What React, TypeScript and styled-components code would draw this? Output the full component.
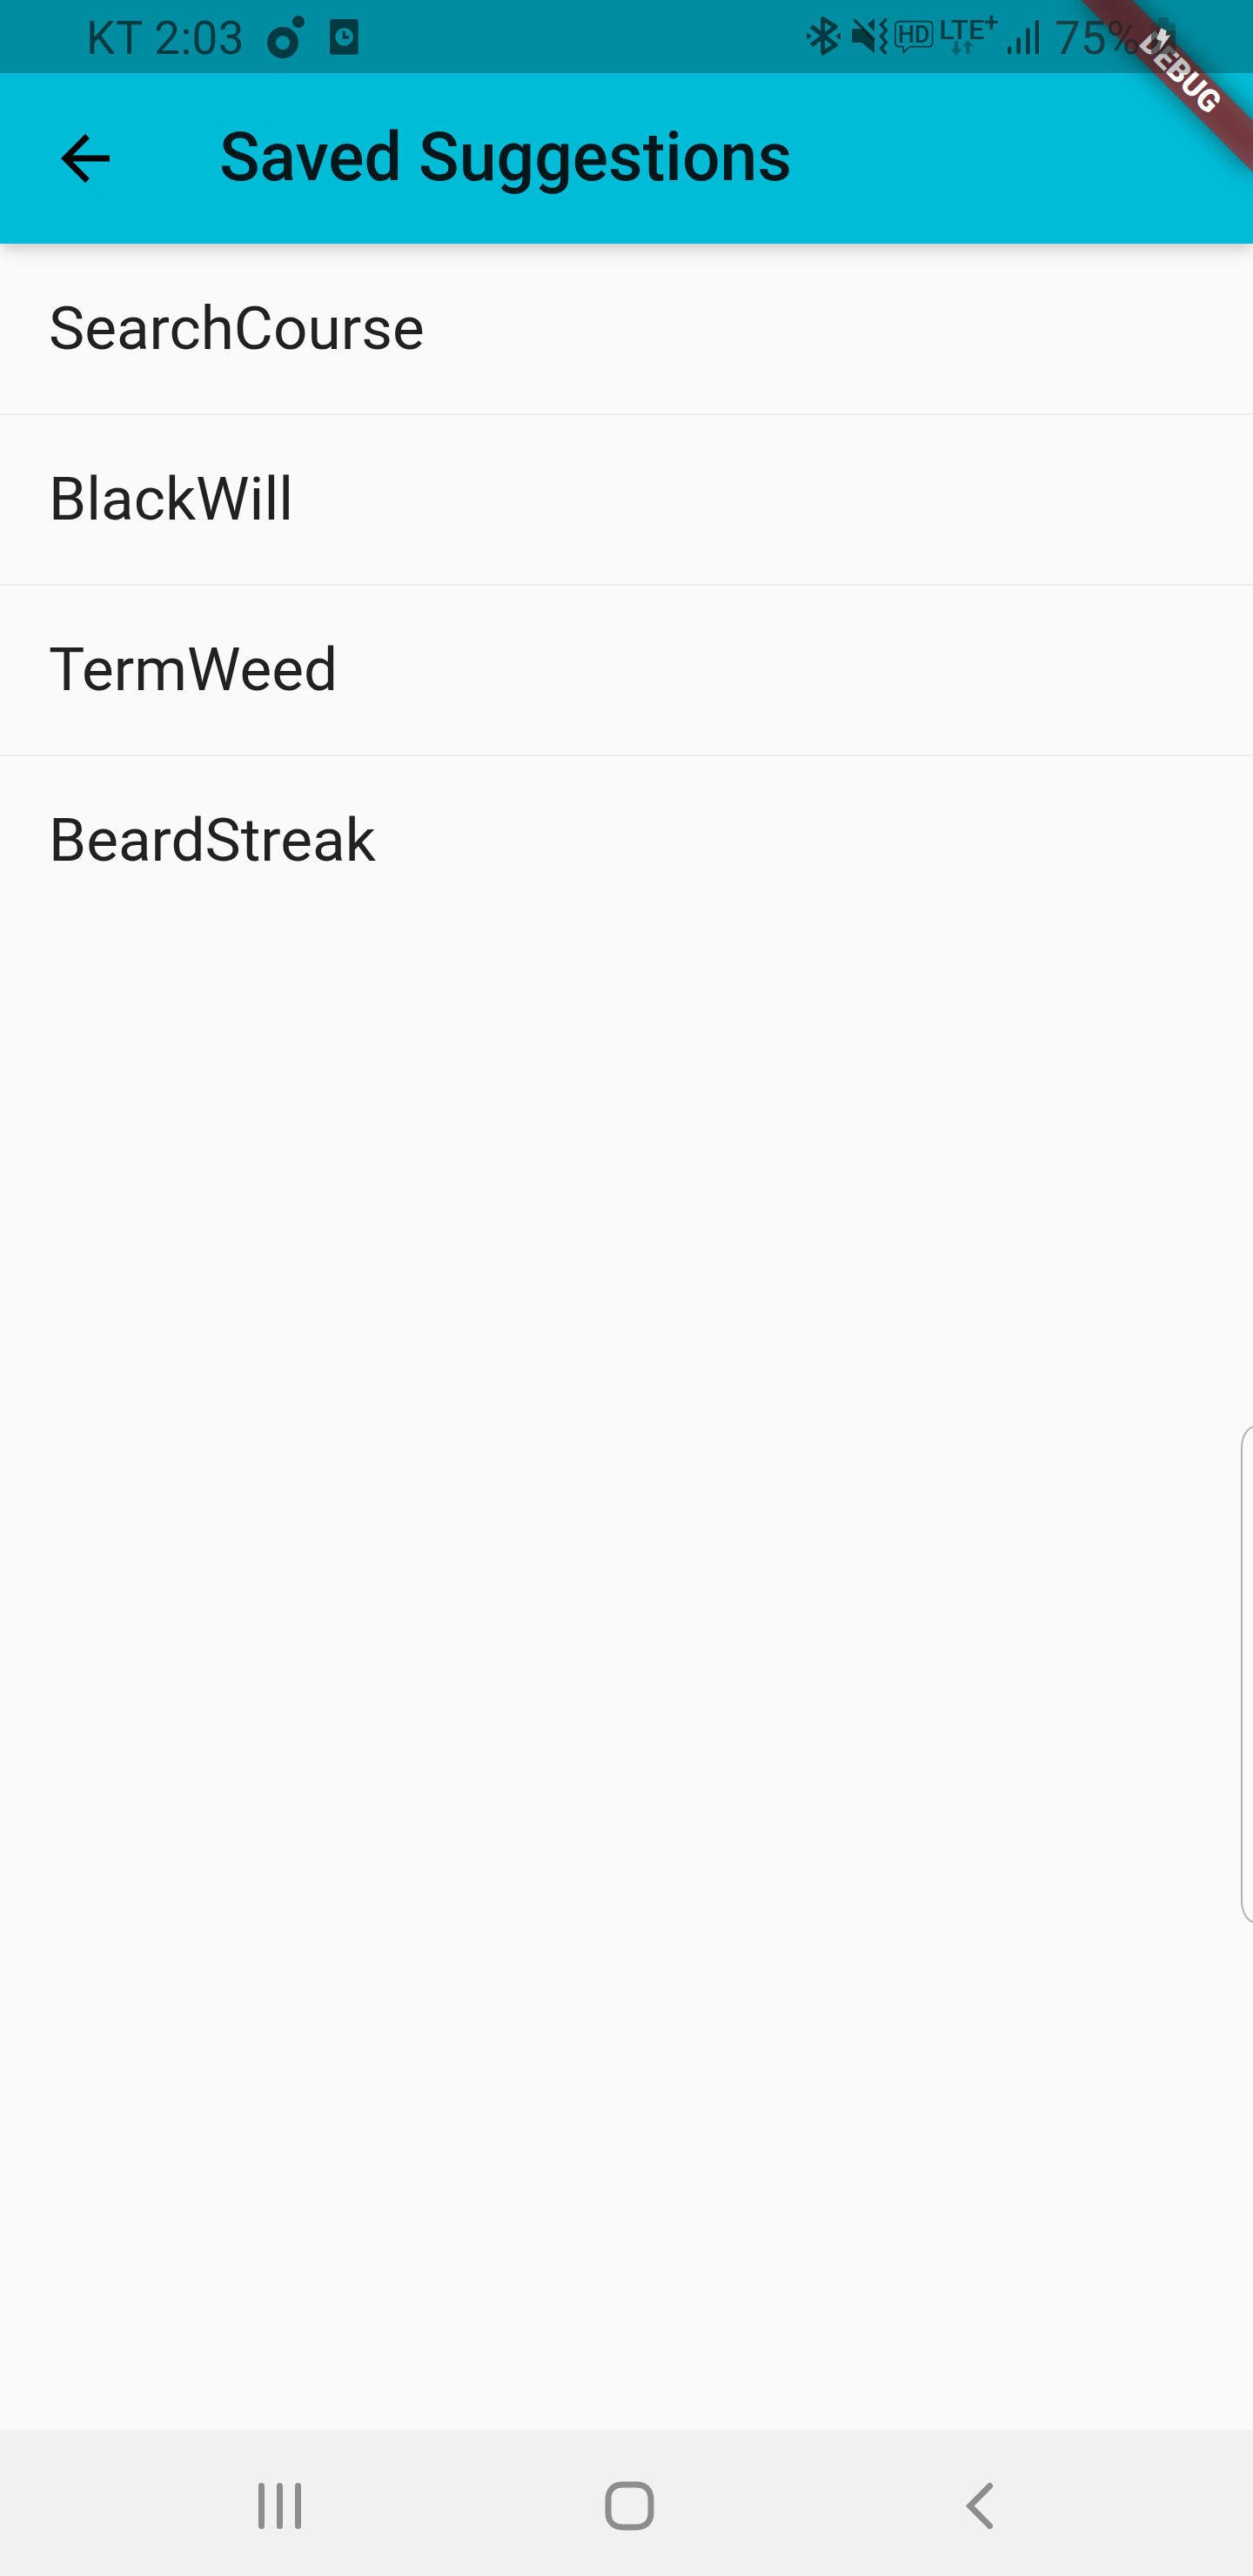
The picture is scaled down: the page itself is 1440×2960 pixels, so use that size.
import React from 'react';
import styled, { createGlobalStyle } from 'styled-components';

const GlobalStyle = createGlobalStyle`
  html, body { margin: 0; padding: 0; }
  body { font-family: Roboto, "Liberation Sans", sans-serif; background: #fafafa; }
`;

const Screen = styled.div`
  position: relative;
  display: flex;
  flex-direction: column;
  width: 1440px;
  height: 2960px;
  overflow: hidden;
  background: #fafafa;
`;

const Header = styled.header`
  position: relative;
  z-index: 1;
  background: #00bcd7;
  box-shadow: 0 7px 14px -3.5px rgba(0, 0, 0, 0.14), 0 14px 17.5px rgba(0, 0, 0, 0.04), 0 3.5px 20px rgba(0, 0, 0, 0.04);
`;

const StatusBar = styled.div`
  position: relative;
  z-index: 3;
  box-sizing: border-box;
  display: flex;
  justify-content: space-between;
  height: 84px;
  padding: 0 87px 0 98px;
  background: rgba(0, 0, 0, 0.25);
  color: rgba(0, 0, 0, 0.59);
`;

const StatusGroup = styled.div`
  display: flex;
  align-items: center;
`;

const StatusText = styled.span<{ $width: number; $indent: number; $faded?: boolean }>`
  width: ${(p) => p.$width}px;
  padding: 2px 0 0 ${(p) => p.$indent}px;
  font-size: 53px;
  line-height: 84px;
  height: 84px;
  box-sizing: border-box;
  letter-spacing: ${(p) => (p.$faded ? 0 : 0.4)}px;
  white-space: nowrap;
  color: ${(p) => (p.$faded ? 'rgba(33, 33, 33, 0.7)' : 'inherit')};
`;

const StatusIcon = styled.svg<{ $width: number }>`
  display: block;
  flex: none;
  width: ${(p) => p.$width}px;
  height: 84px;
`;

const Toolbar = styled.div`
  display: flex;
  align-items: center;
  height: 196px;
  padding-left: 56px;
  gap: 112px;
`;

const BackButton = styled.button`
  display: flex;
  padding: 0;
  border: 0;
  background: none;
`;

const Title = styled.h1`
  margin: 0 0 2px;
  font-size: 77px;
  font-weight: 500;
  line-height: 90px;
  white-space: nowrap;
  color: rgba(0, 0, 0, 0.87);
`;

const BannerClip = styled.div`
  position: absolute;
  z-index: 2;
  top: 0;
  right: 0;
  width: 320px;
  height: 320px;
  overflow: hidden;
  pointer-events: none;
`;

const BannerAxis = styled.div`
  position: absolute;
  top: 0;
  left: 100%;
  width: 0;
  height: 0;
  transform: rotate(45deg);
`;

const BannerShadow = styled.div`
  position: absolute;
  left: -140px;
  top: 98px;
  width: 280px;
  height: 42px;
  background: rgba(0, 0, 0, 0.5);
  filter: blur(13.9px);
`;

const BannerStrip = styled.div`
  position: absolute;
  left: -140px;
  top: 98px;
  width: 280px;
  height: 42px;
  display: flex;
  align-items: center;
  justify-content: center;
  background: rgba(183, 28, 28, 0.627);
  color: #fff;
  font-size: 35.7px;
  font-weight: 900;
  line-height: 1;
`;

const List = styled.ul`
  flex: 1;
  margin: 0;
  padding: 1px 0 0;
  list-style: none;
`;

const Row = styled.li`
  box-sizing: border-box;
  display: flex;
  align-items: center;
  height: 196px;
  padding: 0 56px 1px;
  border-bottom: 2px solid #ebebeb;
  font-size: 69.3px;
  color: rgba(0, 0, 0, 0.87);

  &:last-child {
    border-bottom-color: transparent;
  }
`;

const EdgeHandle = styled.div`
  position: absolute;
  top: 1638px;
  left: 1426px;
  box-sizing: border-box;
  width: 40px;
  height: 572px;
  border: 2px solid #b0b0b0;
  border-radius: 17px / 26px;
`;

const NavBar = styled.nav`
  box-sizing: border-box;
  display: flex;
  align-items: center;
  justify-content: space-between;
  height: 168px;
  padding: 0 273px 0 281px;
  background: #f1f1f1;
  color: #8d8d8d;
`;

const NavIcon = styled.svg`
  display: block;
  width: 80px;
  height: 80px;
  margin-top: 7px;
`;

const SAVED = ['SearchCourse', 'BlackWill', 'TermWeed', 'BeardStreak'];

const DiscIcon = () => (
  <StatusIcon $width={72} viewBox="654 0 216 252">
    <circle cx="735" cy="147" r="39" fill="none" stroke="currentColor" strokeWidth="30" />
    <circle cx="789" cy="75" r="21" fill="currentColor" />
  </StatusIcon>
);

const ClockCardIcon = () => (
  <StatusIcon $width={50} viewBox="870 0 150 252">
    <path
      fill="currentColor"
      fillRule="evenodd"
      d="M905 66H987Q995 66 995 74V180Q995 188 987 188H905Q897 188 897 180V74Q897 66 905 66ZM947 96A31 31 0 1 0 947 158A31 31 0 1 0 947 96ZM941 107H951V124H963V134H941Z"
    />
  </StatusIcon>
);

const BluetoothIcon = () => (
  <StatusIcon $width={45} viewBox="45 0 135 252">
    <path
      d="M67 91L151 155L107 183V65L151 92L67 156"
      fill="none"
      stroke="currentColor"
      strokeWidth="15"
      strokeLinejoin="round"
    />
    <path d="M52 112L69 125L52 138ZM168 112L151 125L168 138Z" fill="currentColor" />
  </StatusIcon>
);

const MuteVibrateIcon = () => (
  <StatusIcon $width={55} viewBox="180 0 165 252">
    <path d="M214 99H245L285 139V183L240 147H214Q207 147 207 140V106Q207 99 214 99ZM260 84L285 63V109Z" fill="currentColor" />
    <path d="M215 68L285 138" stroke="currentColor" strokeWidth="10" />
    <path d="M326 65L308 84L325 105L308 125L325 146L308 166L325 185" fill="none" stroke="currentColor" strokeWidth="11" />
  </StatusIcon>
);

const HdIcon = () => (
  <StatusIcon $width={51} viewBox="345 0 153 252">
    <path
      d="M371 74H472Q485 74 485 87V147Q485 161 472 161H407L385 181V161H371Q357 161 357 147V87Q357 74 371 74Z"
      fill="none"
      stroke="currentColor"
      strokeWidth="5"
      strokeLinejoin="round"
    />
    <text x="366" y="148" fontSize="82" fontWeight="500" textLength="110" lengthAdjust="spacingAndGlyphs" fill="currentColor">HD</text>
  </StatusIcon>
);

const LteIcon = () => (
  <StatusIcon $width={76} viewBox="498 0 228 252">
    <text x="508" y="135" fontSize="96" fontWeight="500" textLength="156" lengthAdjust="spacingAndGlyphs" fill="currentColor">LTE</text>
    <text x="662" y="108" fontSize="94" fontWeight="500" fill="currentColor">+</text>
    <path
      d="M560 141H573V168H586L567 193L548 168H560ZM600 186V160H587L607 139L627 160H613V186Z"
      fill="currentColor"
      opacity="0.5"
    />
  </StatusIcon>
);

const SignalIcon = () => (
  <StatusIcon $width={49} viewBox="726 0 147 252">
    <g fill="currentColor">
      <rect x="744" y="160" width="13" height="27" rx="5" />
      <rect x="775" y="129" width="14" height="58" rx="5" />
      <rect x="807" y="97" width="14" height="90" rx="5" />
      <rect x="839" y="69" width="13" height="118" rx="5" />
    </g>
  </StatusIcon>
);

const BatteryIcon = () => (
  <StatusIcon $width={40} viewBox="399 0 120 252">
    <path d="M453 80V66Q453 60 459 60H484Q490 60 490 66V80H507Q513 80 513 86V105H429V86Q429 80 435 80Z" fill="#212121" opacity="0.3" />
    <path d="M429 105H513V181Q513 187 507 187H435Q429 187 429 181Z" fill="#212121" opacity="0.6" />
    <path d="M463 97L482 106L479 123L496 121L458 173L466 142L447 134Z" fill="#d8d4d4" />
  </StatusIcon>
);

export default function App() {
  return (
    <>
      <GlobalStyle />
      <Screen>
        <Header>
          <StatusBar>
            <StatusGroup>
              <StatusText $width={200} $indent={1}>KT 2:03</StatusText>
              <DiscIcon />
              <ClockCardIcon />
            </StatusGroup>
            <StatusGroup>
              <BluetoothIcon />
              <MuteVibrateIcon />
              <HdIcon />
              <LteIcon />
              <SignalIcon />
              <StatusText $width={112} $indent={11} $faded>75%</StatusText>
              <BatteryIcon />
            </StatusGroup>
          </StatusBar>
          <Toolbar>
            <BackButton aria-label="Back">
              <svg width="84" height="84" viewBox="0 0 24 24">
                <path d="M20 11H7.83l5.59-5.59L12 4l-8 8 8 8 1.41-1.41L7.83 13H20v-2z" />
              </svg>
            </BackButton>
            <Title>Saved Suggestions</Title>
          </Toolbar>
          <BannerClip>
            <BannerAxis>
              <BannerShadow />
              <BannerStrip>DEBUG</BannerStrip>
            </BannerAxis>
          </BannerClip>
        </Header>
        <List>
          {SAVED.map((name) => (
            <Row key={name}>{name}</Row>
          ))}
        </List>
        <EdgeHandle />
        <NavBar>
          <NavIcon viewBox="281 2840 80 80">
            <path d="M300.5 2856.5V2902.5M321.5 2856.5V2902.5M342.5 2856.5V2902.5" stroke="currentColor" strokeWidth="7" strokeLinecap="round" />
          </NavIcon>
          <NavIcon viewBox="684 2840 80 80">
            <path
              d="M716 2855H731C742 2855 748 2861 748 2872V2887C748 2898 742 2904 731 2904H716C705 2904 699 2898 699 2887V2872C699 2861 705 2855 716 2855Z"
              fill="none"
              stroke="currentColor"
              strokeWidth="7"
            />
          </NavIcon>
          <NavIcon viewBox="1087 2840 80 80">
            <path d="M1137.5 2856.5L1114.7 2879.5L1137.5 2902.5" fill="none" stroke="currentColor" strokeWidth="7" strokeLinecap="round" />
          </NavIcon>
        </NavBar>
      </Screen>
    </>
  );
}
